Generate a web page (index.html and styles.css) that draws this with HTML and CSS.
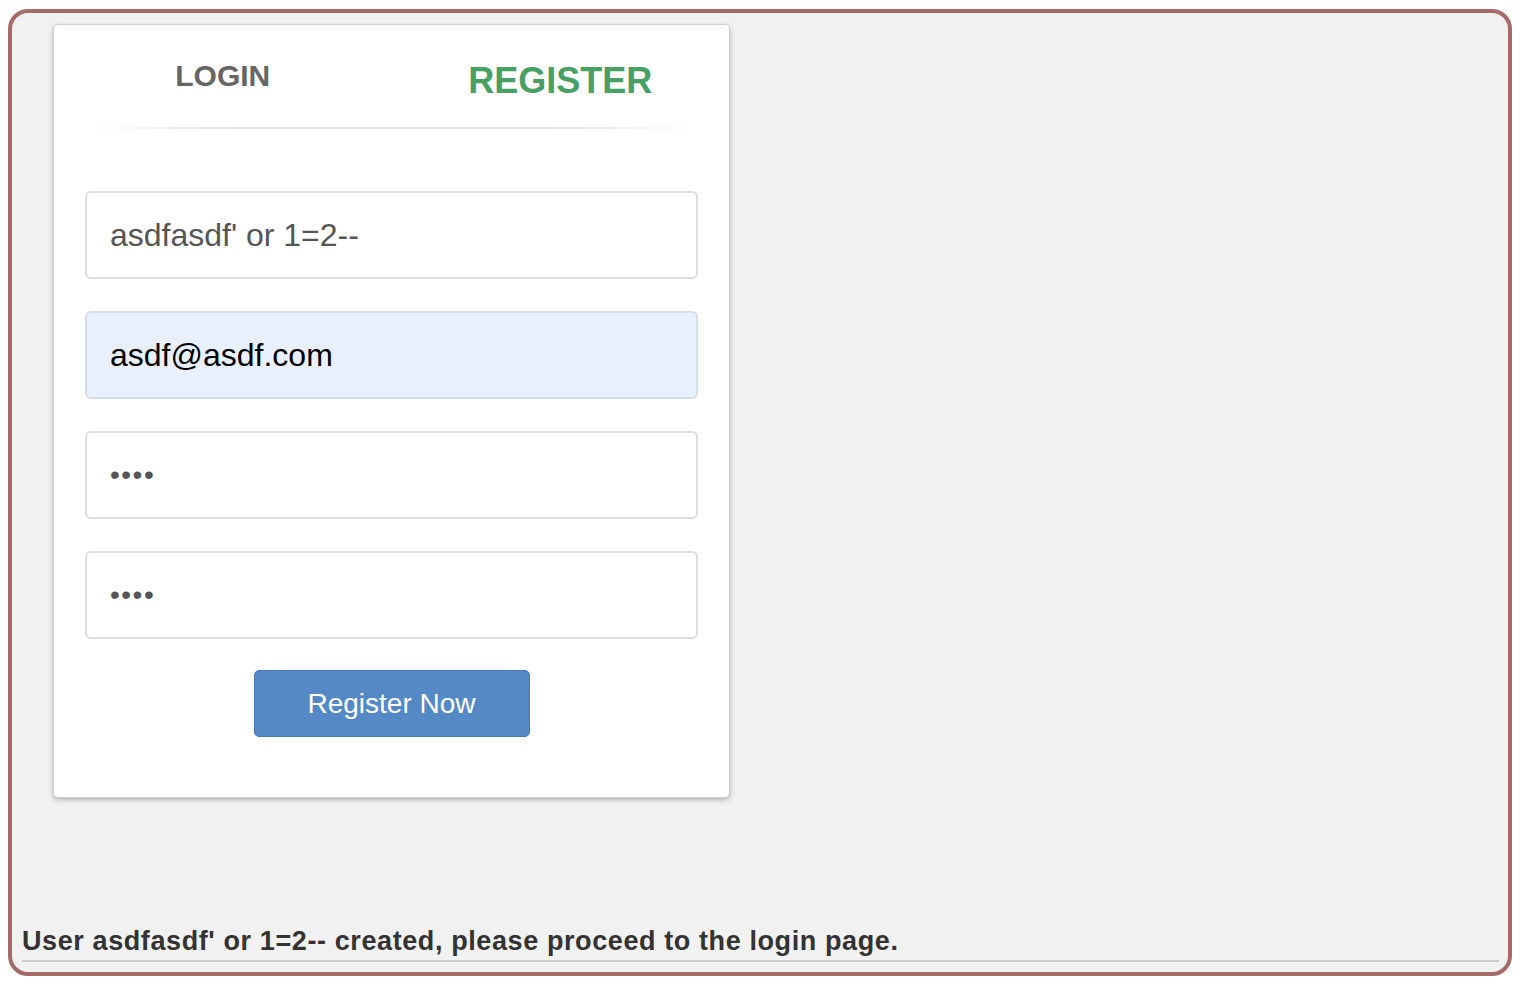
FILE: index.html
```html
<!DOCTYPE html>
<html lang="en">
<head>
<meta charset="utf-8">
<title>Register</title>
<link rel="stylesheet" href="styles.css">
</head>
<body>
<div class="frame">
  <div class="card">
    <div class="tabs">
      <div class="tab">LOGIN</div>
      <div class="tab tab-active">REGISTER</div>
    </div>
    <div class="divider"></div>
    <form class="form">
      <input class="field" type="text" value="asdfasdf' or 1=2--">
      <input class="field field-filled" type="email" value="asdf@asdf.com">
      <input class="field field-secret" type="password" value="asdf">
      <input class="field field-secret" type="password" value="asdf">
      <button class="submit" type="button">Register Now</button>
    </form>
  </div>
  <div class="message">User asdfasdf' or 1=2-- created, please proceed to the login page.</div>
</div>
</body>
</html>
```
FILE: styles.css
```css
html, body {
  background: #ffffff;
}
body {
  margin: 9px 8px 10px;
  font-family: "Liberation Sans", Arial, sans-serif;
}
.frame {
  box-sizing: border-box;
  height: 967px;
  border: 4px solid #a66b68;
  border-radius: 20px;
  background: #f1f1f1;
  display: flex;
  flex-direction: column;
  padding: 11px 0 10px 41px;
}
.card {
  box-sizing: border-box;
  width: 677px;
  background: #ffffff;
  border: 1px solid #cfcfcf;
  border-radius: 5px;
  box-shadow: 0 2px 5px rgba(0, 0, 0, 0.25);
}
.tabs {
  display: grid;
  grid-template-columns: 1fr 1fr;
  height: 102px;
  align-items: center;
  text-align: center;
}
.tab {
  font-weight: bold;
  font-size: 30px;
  color: #666666;
}
.tab-active {
  font-size: 36px;
  color: #48a064;
  padding-top: 10px;
}
.divider {
  height: 2px;
  margin: 0 32px;
  background: linear-gradient(to right, rgba(224,224,224,0), #e2e2e2 25%, #e2e2e2 75%, rgba(224,224,224,0));
}
.form {
  display: flex;
  flex-direction: column;
  gap: 32px;
  padding: 62px 31px 60px;
  margin: 0;
}
.field {
  box-sizing: border-box;
  height: 88px;
  width: 100%;
  border: 2px solid #dedede;
  border-radius: 6px;
  padding: 0 23px;
  font-family: "Liberation Sans", Arial, sans-serif;
  font-size: 32px;
  color: #555555;
  background: #ffffff;
  outline: none;
}
.field-secret {
  font-size: 28px;
  letter-spacing: 1.5px;
}
.field-filled {
  background: #e8f0fd;
  border-color: #d7dde6;
  color: #000000;
}
.submit {
  align-self: center;
  margin-top: -1px;
  width: 276px;
  height: 67px;
  background: #5589c6;
  border: 1px solid #4679ba;
  border-radius: 5px;
  color: #ffffff;
  font-family: "Liberation Sans", Arial, sans-serif;
  font-size: 28px;
}
.message {
  margin-top: auto;
  margin-left: -31px;
  margin-right: 9px;
  padding-bottom: 3px;
  border-bottom: 2px solid #cccccc;
  font-weight: bold;
  font-size: 27px;
  line-height: 31px;
  letter-spacing: 0.6px;
  color: #333333;
}
```
